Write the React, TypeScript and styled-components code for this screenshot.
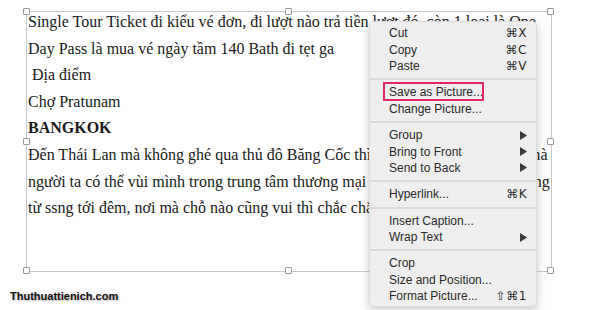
import React from 'react';
import styled, { createGlobalStyle } from 'styled-components';

const GlobalStyle = createGlobalStyle`
    html, body {
        margin: 0;
        padding: 0;
        background: #ffffff;
    }
`;

const Page = styled.div`
    position: relative;
    width: 600px;
    height: 310px;
    overflow: hidden;
    padding: 11px 0 0 26px;
    box-sizing: border-box;
`;

const Frame = styled.div`
    position: relative;
    width: 526px;
    height: 261px;
    border: 1px solid #c9c9c9;
    box-sizing: border-box;
`;

const TextBlock = styled.div`
    margin-top: -3px;
    padding-left: 1px;
    height: 262px;
    overflow: hidden;
    font-family: 'Liberation Serif', 'Times New Roman', serif;
    font-size: 16px;
    line-height: 26.6px;
    color: #1a1a1a;
`;

const Line = styled.div<{ $bold?: boolean }>`
    white-space: pre;
    font-weight: ${(p) => (p.$bold ? 700 : 400)};
`;

const Handle = styled.span<{ $x: string; $y: string }>`
    position: absolute;
    left: ${(p) => p.$x};
    top: ${(p) => p.$y};
    width: 7px;
    height: 7px;
    margin: -4px 0 0 -4px;
    background: #ffffff;
    border: 1px solid #9a9a9a;
    border-radius: 1px;
    box-sizing: border-box;
`;

const Watermark = styled.div`
    margin: 18px 0 0 -16px;
    font-family: 'Liberation Sans', Arial, sans-serif;
    font-weight: 700;
    font-size: 11px;
    color: #111111;
    text-shadow: 1px 1px 2px rgba(0, 0, 0, 0.35);
`;

const Menu = styled.div`
    position: absolute;
    left: 369px;
    top: 21px;
    width: 168px;
    padding: 3px 0 2px;
    box-sizing: border-box;
    background: #eeeeee;
    border: 1px solid rgba(0, 0, 0, 0.08);
    border-radius: 5px;
    box-shadow: 0 3px 10px rgba(0, 0, 0, 0.22);
    font-family: 'Liberation Sans', Arial, 'DejaVu Sans', sans-serif;
    font-size: 12px;
    color: #2a2a2a;
`;

const Item = styled.div<{ $marked?: boolean }>`
    position: relative;
    display: flex;
    align-items: center;
    justify-content: space-between;
    height: 16.4px;
    padding: 0 9px 0 19px;

    ${(p) =>
        p.$marked &&
        `
        &::before {
            content: '';
            position: absolute;
            left: 13px;
            top: -2px;
            width: 101px;
            height: 19px;
            border: 2px solid #e3266a;
            box-sizing: border-box;
        }
    `}
`;

const Shortcut = styled.span`
    font-family: 'DejaVu Sans', 'Liberation Sans', sans-serif;
    font-size: 12px;
    letter-spacing: 0.5px;
`;

const Separator = styled.div`
    height: 10px;
    display: flex;
    align-items: center;

    &::after {
        content: '';
        flex: 1;
        height: 2px;
        background: #dadada;
    }
`;

const Arrow = () => (
    <svg width="7" height="9" viewBox="0 0 7 9">
        <polygon points="0,0 7,4.5 0,9" fill="#3a3a3a" />
    </svg>
);

type MenuEntry =
    | { sep: true }
    | { label: string; shortcut?: string; submenu?: boolean; marked?: boolean };

const entries: MenuEntry[] = [
    { label: 'Cut', shortcut: '⌘X' },
    { label: 'Copy', shortcut: '⌘C' },
    { label: 'Paste', shortcut: '⌘V' },
    { sep: true },
    { label: 'Save as Picture...', marked: true },
    { label: 'Change Picture...' },
    { sep: true },
    { label: 'Group', submenu: true },
    { label: 'Bring to Front', submenu: true },
    { label: 'Send to Back', submenu: true },
    { sep: true },
    { label: 'Hyperlink...', shortcut: '⌘K' },
    { sep: true },
    { label: 'Insert Caption...' },
    { label: 'Wrap Text', submenu: true },
    { sep: true },
    { label: 'Crop' },
    { label: 'Size and Position...' },
    { label: 'Format Picture...', shortcut: '⇧⌘1' },
];

const lines = [
    'Single Tour Ticket đi kiểu vé đơn, đi lượt nào trả tiền lượt đó, còn 1 loại là One',
    'Day Pass là mua vé ngày tầm 140 Bath đi tẹt ga',
    ' Địa điểm',
    'Chợ Pratunam',
    'BANGKOK',
    'Đến Thái Lan mà không ghé qua thủ đô Băng Cốc thì chưa đến Thái Lan, nơi mà',
    'người ta có thể vùi mình trong trung tâm thương mại để mua sắm, ăn uống không ngừng',
    'từ ssng tới đêm, nơi mà chỗ nào cũng vui thì chắc chắn bạn sẽ không muốn về',
];

const handles: [string, string][] = [
    ['0', '0'],
    ['50%', '0'],
    ['100%', '0'],
    ['0', '50%'],
    ['100%', '50%'],
    ['0', '100%'],
    ['50%', '100%'],
    ['100%', '100%'],
];

export default function App() {
    return (
        <Page>
            <GlobalStyle />
            <Frame>
                <TextBlock>
                    {lines.map((l) => (
                        <Line key={l} $bold={l === 'BANGKOK'}>
                            {l}
                        </Line>
                    ))}
                </TextBlock>
                {handles.map(([x, y]) => (
                    <Handle key={x + y} $x={x} $y={y} />
                ))}
            </Frame>
            <Watermark>Thuthuattienich.com</Watermark>
            <Menu>
                {entries.map((e, i) =>
                    'sep' in e ? (
                        <Separator key={i} />
                    ) : (
                        <Item key={i} $marked={e.marked}>
                            <span>{e.label}</span>
                            {e.shortcut && <Shortcut>{e.shortcut}</Shortcut>}
                            {e.submenu && <Arrow />}
                        </Item>
                    )
                )}
            </Menu>
        </Page>
    );
}
